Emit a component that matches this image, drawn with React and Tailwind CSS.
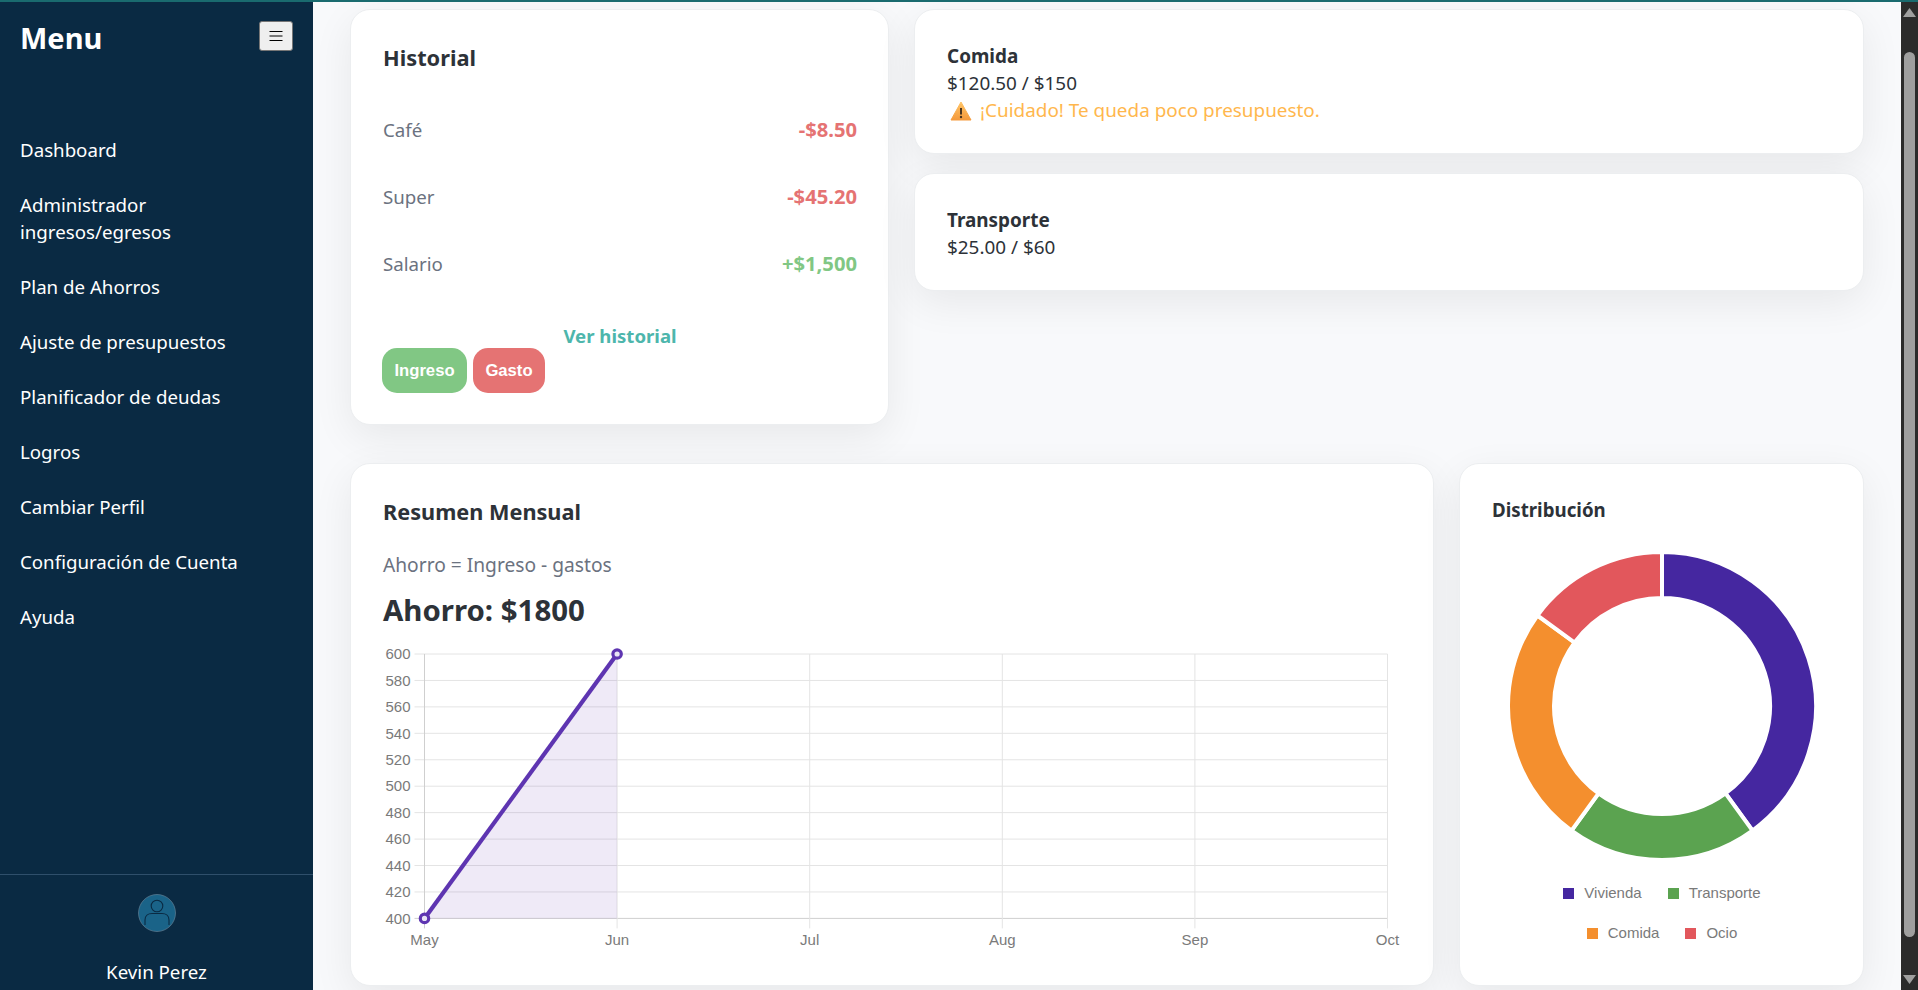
import React from "react";

const navItems = [
  "Dashboard",
  "Administrador ingresos/egresos",
  "Plan de Ahorros",
  "Ajuste de presupuestos",
  "Planificador de deudas",
  "Logros",
  "Cambiar Perfil",
  "Configuración de Cuenta",
  "Ayuda",
];

const movements = [
  { name: "Café", amount: "-$8.50", color: "text-[#e57373]" },
  { name: "Super", amount: "-$45.20", color: "text-[#e57373]" },
  { name: "Salario", amount: "+$1,500", color: "text-[#81c784]" },
];

const yTicks = [600, 580, 560, 540, 520, 500, 480, 460, 440, 420, 400];
const months = ["May", "Jun", "Jul", "Aug", "Sep", "Oct"];

const slices = [
  { color: "#4527a0", from: 0, to: 144 },
  { color: "#5ba350", from: 144, to: 216 },
  { color: "#f48f2e", from: 216, to: 306 },
  { color: "#e2575c", from: 306, to: 360 },
];

const polar = (r, deg) => {
  const a = (deg * Math.PI) / 180;
  return [160 + r * Math.sin(a), 160 - r * Math.cos(a)];
};

const slicePath = (from, to) => {
  const R = 154;
  const r = 108;
  const [x1, y1] = polar(R, from);
  const [x2, y2] = polar(R, to);
  const [x3, y3] = polar(r, to);
  const [x4, y4] = polar(r, from);
  const large = to - from > 180 ? 1 : 0;
  return `M${x1} ${y1}A${R} ${R} 0 ${large} 1 ${x2} ${y2}L${x3} ${y3}A${r} ${r} 0 ${large} 0 ${x4} ${y4}Z`;
};

const Sidebar = () => (
  <aside className="w-[313px] shrink-0 bg-[#0a2a43] text-white flex flex-col">
    <div className="h-[120px] px-5 pt-[17px] flex justify-between items-start">
      <h2 className="text-[29px] leading-[38px] font-bold">Menu</h2>
      <button className="w-[34px] h-[30px] mt-[2px] bg-[#efefef] border border-[#767676] rounded-[3px] flex items-center justify-center">
        <svg width="14" height="12" viewBox="0 0 14 12">
          <path d="M.5 1.500h13M.5 6h13M.5 10.500h13" stroke="#000" strokeWidth="1" />
        </svg>
      </button>
    </div>
    <nav className="flex-1 flex flex-col">
      {navItems.map((item) => (
        <a key={item} className="px-5 py-[14px] text-[18.7px] leading-[27px] text-white">
          {item}
        </a>
      ))}
    </nav>
    <div className="h-[116px] border-t border-[#2f4f6b] flex flex-col items-center pt-[19px]">
      <svg width="38" height="38" viewBox="0 0 38 38">
        <circle cx="19" cy="19" r="18.500" fill="#1a6388" stroke="#6f8ca0" strokeWidth="0.6" />
        <circle cx="19" cy="12" r="5.800" fill="none" stroke="#0a2a43" strokeWidth="1.100" />
        <path d="M7 31v-5c0-4 3-6.500 7-6.500h10c4 0 7 2.500 7 6.500v5" fill="none" stroke="#0a2a43" strokeWidth="1.100" />
      </svg>
      <span className="mt-[26px] text-[18.7px] leading-[27px]">Kevin Perez</span>
    </div>
  </aside>
);

const Card = ({ className, children }) => (
  <div
    className={`bg-white border border-[#eceef0] rounded-[20px] p-[31px] shadow-[0_12px_40px_rgba(0,0,0,0.07)] ${className}`}
  >
    {children}
  </div>
);

const Historial = () => (
  <Card className="h-[416px] pt-[32px] pl-[32px]">
    <h3 className="text-[21.8px] leading-[32px] font-bold text-[#2d3238] mb-[22px]">Historial</h3>
    {movements.map((m) => (
      <div key={m.name} className="flex justify-between py-5 text-[18.7px] leading-[27px]">
        <span className="text-[#6b7280]">{m.name}</span>
        <span className={`font-bold text-[20.2px] ${m.color}`}>{m.amount}</span>
      </div>
    ))}
    <div className="mt-[26px] text-center text-[18.6px] leading-[25px] font-bold text-[#4db6ac]">Ver historial</div>
    <div className="-ml-[1px] flex gap-[6px] font-['Liberation_Sans',sans-serif] font-bold text-white text-[16.67px]">
      <button className="w-[85px] h-[45px] rounded-[15px] bg-[#81c784]">Ingreso</button>
      <button className="w-[72px] h-[45px] rounded-[15px] bg-[#e57373]">Gasto</button>
    </div>
  </Card>
);

const WarningIcon = () => (
  <svg width="22" height="20" viewBox="0 0 22 20" className="shrink-0 ml-[3px] mr-[8px]">
    <defs>
      <linearGradient id="warn" x1="0" y1="0" x2="0" y2="1">
        <stop offset="0" stopColor="#ffc466" />
        <stop offset="1" stopColor="#f59a3c" />
      </linearGradient>
    </defs>
    <path d="M11 1L21 19H1Z" fill="url(#warn)" stroke="url(#warn)" strokeLinejoin="round" />
    <path d="M11 7v6.500" stroke="#4a3520" strokeWidth="2" />
    <circle cx="11" cy="16" r="1.200" fill="#4a3520" />
  </svg>
);

const Budgets = () => (
  <div className="flex flex-col gap-[19px]">
    <Card className="h-[145px] pt-[33px] pl-[32px] text-[18.9px] leading-[27px] text-[#2d3238]">
      <div className="font-bold">Comida</div>
      <div>$120.50 / $150</div>
      <div className="flex items-center text-[#ffb74d]">
        <WarningIcon />
        ¡Cuidado! Te queda poco presupuesto.
      </div>
    </Card>
    <Card className="h-[118px] pt-[33px] pl-[32px] text-[18.9px] leading-[27px] text-[#2d3238]">
      <div className="font-bold">Transporte</div>
      <div>$25.00 / $60</div>
    </Card>
  </div>
);

const LineChart = () => {
  const x0 = 42.5;
  const stepX = 192.6;
  const y0 = 15;
  const stepY = 26.44;
  const bottom = y0 + stepY * 10;
  const right = x0 + stepX * 5;
  return (
    <svg width="1019" height="310" viewBox="0 0 1019 310" className="block mt-[9px] -ml-[1px] font-['Liberation_Sans',sans-serif]">
      {yTicks.map((t, i) => {
        const y = y0 + stepY * i;
        return (
          <g key={t}>
            <line x1={x0 - 10} x2={right} y1={y} y2={y} stroke={t === 400 ? "#cfcfcf" : "#e4e4e4"} strokeWidth="1" />
            <text x={x0 - 14} y={y + 5.200} textAnchor="end" fontSize="15" fill="#7a7a7a">{t}</text>
          </g>
        );
      })}
      {months.map((m, i) => {
        const x = x0 + stepX * i;
        return (
          <g key={m}>
            <line x1={x} x2={x} y1={y0} y2={bottom + 10} stroke={i === 0 ? "#cfcfcf" : "#e4e4e4"} strokeWidth="1" />
            <text x={x} y={bottom + 27} textAnchor="middle" fontSize="15" fill="#7a7a7a">{m}</text>
          </g>
        );
      })}
      <path d={`M${x0} ${bottom}L${x0 + stepX} ${y0}V${bottom}Z`} fill="#5e35b1" fillOpacity="0.1" />
      <line x1={x0} y1={bottom} x2={x0 + stepX} y2={y0} stroke="#5e35b1" strokeWidth="4.200" />
      <circle cx={x0} cy={bottom} r="4.200" fill="#e9e4f5" stroke="#5e35b1" strokeWidth="3.200" />
      <circle cx={x0 + stepX} cy={y0} r="4.200" fill="#e9e4f5" stroke="#5e35b1" strokeWidth="3.200" />
    </svg>
  );
};

const Resumen = () => (
  <Card className="h-[523px] pl-[32px]">
    <h3 className="text-[21.7px] leading-[34px] font-bold text-[#2d3238]">Resumen Mensual</h3>
    <p className="mt-[22px] text-[19.200px] leading-[27px] text-[#6b7280]">Ahorro = Ingreso - gastos</p>
    <p className="mt-[12px] text-[29.4px] leading-[40px] font-bold text-[#2d3238]">Ahorro: $1800</p>
    <LineChart />
  </Card>
);

const LegendItem = ({ color, label }) => (
  <span className="flex items-center gap-[10px]">
    <span className={`w-[11px] h-[11px] ${color}`} />
    {label}
  </span>
);

const Distribucion = () => (
  <Card className="h-[523px] pl-[32px]">
    <h3 className="text-[18.7px] leading-[30px] font-bold text-[#2d3238]">Distribución</h3>
    <svg width="320" height="320" viewBox="0 0 320 320" className="block mx-auto mt-[21px]">
      {slices.map((s) => (
        <path key={s.color} d={slicePath(s.from, s.to)} fill={s.color} stroke="#fff" strokeWidth="4" />
      ))}
    </svg>
    <div className="mt-[19px] flex flex-col items-center gap-[24px] font-['Liberation_Sans',sans-serif] text-[15px] leading-[16px] text-[#7a7a7a]">
      <div className="flex gap-[26px]">
        <LegendItem color="bg-[#4527a0]" label="Vivienda" />
        <LegendItem color="bg-[#5ba350]" label="Transporte" />
      </div>
      <div className="flex gap-[26px]">
        <LegendItem color="bg-[#f48f2e]" label="Comida" />
        <LegendItem color="bg-[#e2575c]" label="Ocio" />
      </div>
    </div>
  </Card>
);

const Scrollbar = () => (
  <div className="w-[17px] shrink-0 bg-[#2b2b2b] flex flex-col items-center pt-[6px] pb-[6px]">
    <svg width="13" height="9" viewBox="0 0 13 9" className="shrink-0">
      <path d="M6.500 0L13 9H0Z" fill="#9f9f9f" />
    </svg>
    <div className="w-[11px] flex-1 mt-[35px] mb-[38px] rounded-[6px] bg-[#9f9f9f]" />
    <svg width="13" height="9" viewBox="0 0 13 9" className="shrink-0">
      <path d="M0 0H13L6.500 9Z" fill="#9f9f9f" />
    </svg>
  </div>
);

export default function App() {
  return (
    <div className="w-[1918px] h-[990px] overflow-hidden flex flex-col font-['Noto_Sans',sans-serif] bg-[#f8f9fb]">
      <div className="h-[2px] shrink-0 bg-[#1a6b6f]" />
      <div className="flex-1 min-h-0 flex">
        <Sidebar />
        <main className="flex-1 min-w-0 px-[37px] pt-[7px] overflow-hidden">
          <div className="grid grid-cols-[539px_1fr] gap-[25px] mb-[38px]">
            <Historial />
            <Budgets />
          </div>
          <div className="grid grid-cols-[1084px_1fr] gap-[25px]">
            <Resumen />
            <Distribucion />
          </div>
        </main>
        <Scrollbar />
      </div>
    </div>
  );
}
